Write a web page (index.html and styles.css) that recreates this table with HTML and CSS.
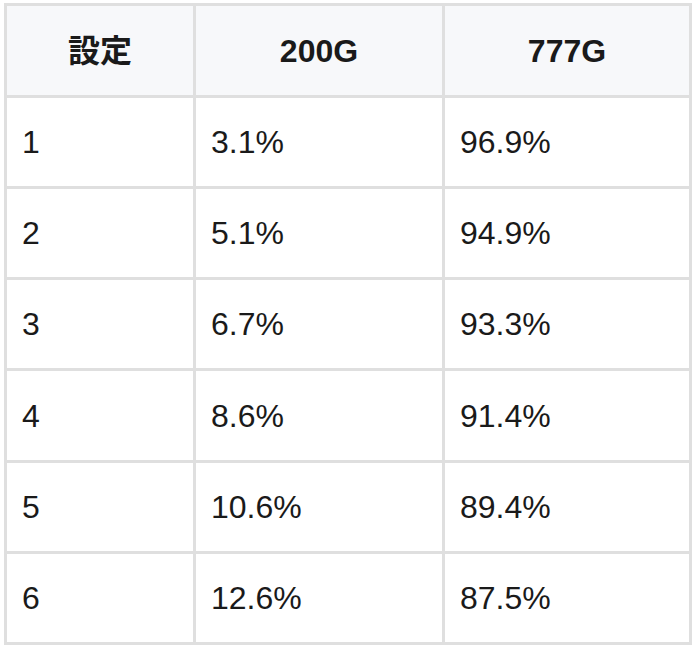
FILE: index.html
```html
<!DOCTYPE html>
<html lang="ja">
<head>
<meta charset="utf-8">
<link rel="stylesheet" href="styles.css">
</head>
<body>
<table class="tbl">
  <thead>
    <tr class="r-a"><th class="c1">設定</th><th class="c2">200G</th><th class="c3">777G</th></tr>
  </thead>
  <tbody>
    <tr class="r-b"><td>1</td><td>3.1%</td><td>96.9%</td></tr>
    <tr class="r-b"><td>2</td><td>5.1%</td><td>94.9%</td></tr>
    <tr class="r-b"><td>3</td><td>6.7%</td><td>93.3%</td></tr>
    <tr class="r-a"><td>4</td><td>8.6%</td><td>91.4%</td></tr>
    <tr class="r-b"><td>5</td><td>10.6%</td><td>89.4%</td></tr>
    <tr class="r-b"><td>6</td><td>12.6%</td><td>87.5%</td></tr>
  </tbody>
</table>
</body>
</html>
```
FILE: styles.css
```css
html, body {
  margin: 0;
  padding: 0;
  background: #ffffff;
}
body {
  padding: 3px 0 0 4px;
  font-family: "Liberation Sans", Arial, "Noto Sans CJK JP", sans-serif;
  color: #1a1a1a;
}
.tbl {
  border-collapse: separate;
  border-spacing: 3px;
  background: #dfdfdf;
  width: 688px;
  table-layout: fixed;
}
.c1 { width: 186px; }
.c2 { width: 246px; }
.c3 { width: 244px; }
.tbl th, .tbl td {
  padding: 0 0 0 15px;
  font-size: 32px;
  line-height: 36px;
  vertical-align: middle;
  background: #ffffff;
}
.tbl th {
  background: #f7f8fa;
  font-weight: bold;
  text-align: center;
  padding: 0;
}
.r-a th, .r-a td { height: 89px; }
.r-b td { height: 88px; }
```
